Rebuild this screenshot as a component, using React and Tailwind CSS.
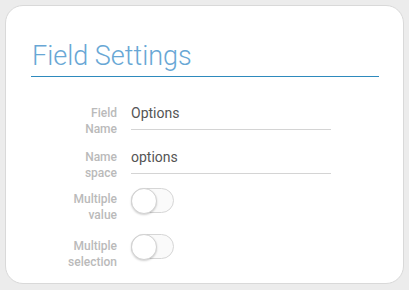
import React, { useState } from 'react';

const Toggle = ({ on, onChange }) => (
  <button
    type="button"
    onClick={() => onChange(!on)}
    className={`relative w-[43px] h-[25px] rounded-full border ${on ? 'bg-[#4993c9] border-[#4993c9]' : 'bg-[#fafafa] border-[#d6d6d6]'}`}
  >
    <span
      className={`absolute top-[-1px] w-[26px] h-[26px] rounded-full bg-white border border-[#d2d2d2] shadow-[0_1px_2px_rgba(0,0,0,0.18)] ${on ? 'left-[16px]' : 'left-[-1px]'}`}
    />
  </button>
);

const Label = ({ lines }) => (
  <div className="w-[86px] shrink-0 text-right text-[12px] leading-[16px] font-medium text-[#bababa]">
    {lines.map((l) => (
      <div key={l}>{l}</div>
    ))}
  </div>
);

export default function App() {
  const [multiValue, setMultiValue] = useState(false);
  const [multiSelect, setMultiSelect] = useState(false);

  return (
    <div className="w-[409px] h-[290px] bg-[#ececec] pt-[5px] pl-[5px] pr-[5px] pb-[6px] font-['Roboto',sans-serif]">
      <div className="h-full rounded-[18px] bg-white border border-[#d9d9d9] pt-[35px] pl-[25px] pr-[24px]">
        {/* Header */}
        <h2 className="font-['Roboto_Light','Roboto',sans-serif] text-[27px] leading-[30px] font-light text-[#68a7d5] pb-[5px] pl-[1px]">
          Field Settings
        </h2>
        <div className="h-[1px] bg-[#2e8abd]" />

        {/* Text fields */}
        <div className="flex gap-[14px] mt-[28px]">
          <Label lines={['Field', 'Name']} />
          <div className="w-[200px] border-b border-[#d4d4d4] text-[14px] leading-[16px] text-[#555] pb-[7px] h-[25px]">
            Options
          </div>
        </div>
        <div className="flex gap-[14px] mt-[12px]">
          <Label lines={['Name', 'space']} />
          <div className="w-[200px] border-b border-[#d4d4d4] text-[14px] leading-[16px] text-[#555] pb-[7px] h-[25px]">
            options
          </div>
        </div>

        {/* Toggles */}
        <div className="flex items-start gap-[14px] mt-[7px]">
          <div className="mt-[3px]">
            <Label lines={['Multiple', 'value']} />
          </div>
          <Toggle on={multiValue} onChange={setMultiValue} />
        </div>
        <div className="flex items-start gap-[14px] mt-[11px]">
          <div className="mt-[4px]">
            <Label lines={['Multiple', 'selection']} />
          </div>
          <Toggle on={multiSelect} onChange={setMultiSelect} />
        </div>
      </div>
    </div>
  );
}
